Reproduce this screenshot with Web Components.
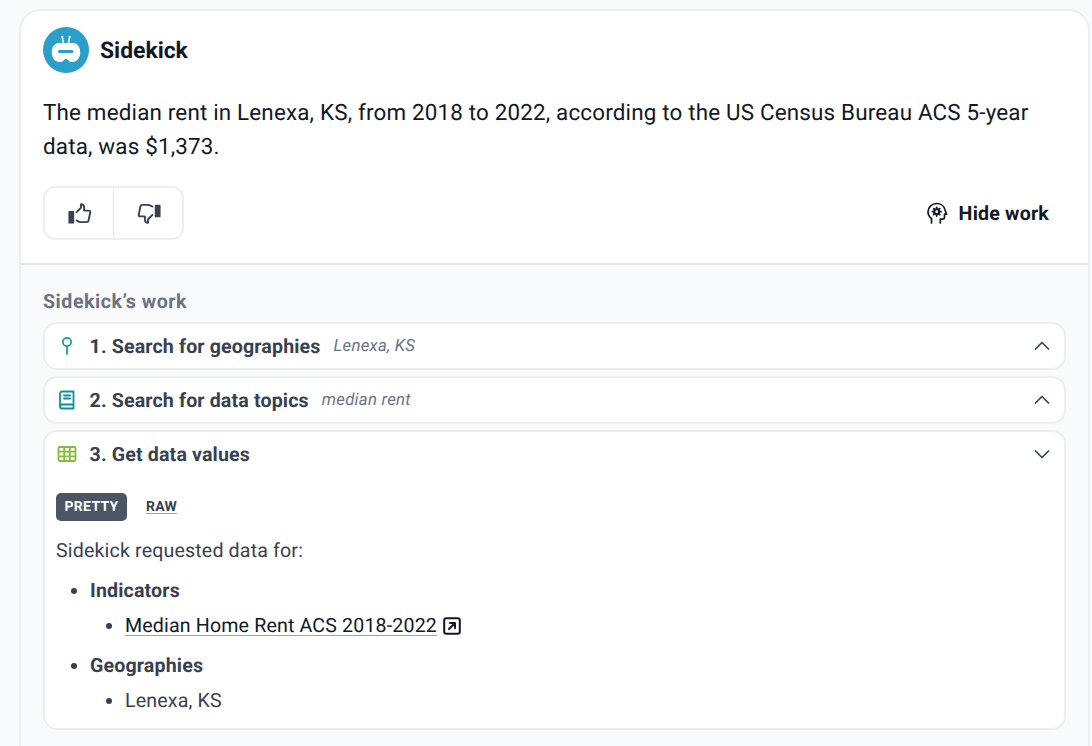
<!DOCTYPE html>
<html lang="en">
<head>
<meta charset="utf-8">
<title>Sidekick</title>
<style>
html,body{margin:0;height:746px;overflow:hidden;background:#fff}
body{font-family:Roboto,"Liberation Sans",sans-serif;color:#374151;text-rendering:geometricPrecision}
</style>
</head>
<body>
<sk-panel>
  <sk-answer>The median rent in Lenexa, KS, from 2018 to 2022, according to the US Census Bureau ACS 5-year data, was $1,373.</sk-answer>
  <sk-work>
    <sk-step num="1" title="Search for geographies" note="Lenexa, KS" icon="pin"></sk-step>
    <sk-step num="2" title="Search for data topics" note="median rent" icon="book"></sk-step>
    <sk-step num="3" title="Get data values" icon="grid" open>
      <sk-tabs></sk-tabs>
      <sk-request></sk-request>
    </sk-step>
  </sk-work>
</sk-panel>

<script>
(function(){
  const ICONS={
    pin:'<svg width="24" height="24" viewBox="0 0 24 24" fill="none" stroke="#10a37f" stroke-width="1.7" stroke-linecap="round"><circle cx="12" cy="8" r="4.1"/><path d="M12 12.2V20"/></svg>',
    book:'<svg width="24" height="24" viewBox="0 0 24 24" fill="none" stroke="#0f8f96" stroke-width="1.8" stroke-linecap="round" stroke-linejoin="round"><path d="M5 18.5V5.5A2 2 0 0 1 7 3.5h11.5v13H7A2 2 0 0 0 5 18.5a2 2 0 0 0 2 2h11.5v-4"/><path d="M9 7.5h6M9 10.5h6"/></svg>',
    grid:'<svg width="24" height="24" viewBox="0 0 24 24" fill="none" stroke="#84bd3c" stroke-width="1.8"><rect x="3.5" y="5" width="17" height="14" rx="1.2"/><path d="M3.5 9.7h17M3.5 14.3h17M9.2 5v14M14.8 5v14"/></svg>'
  };
  const CHEV={
    up:'<svg width="24" height="24" viewBox="0 0 24 24" fill="none" stroke="#374151" stroke-width="1.7" stroke-linecap="round" stroke-linejoin="round"><path d="M5.5 15 12 8.500l6.500 6.500"/></svg>',
    down:'<svg width="24" height="24" viewBox="0 0 24 24" fill="none" stroke="#374151" stroke-width="1.7" stroke-linecap="round" stroke-linejoin="round"><path d="M5.500 9 12 15.500 18.500 9"/></svg>'
  };

  class SkPanel extends HTMLElement {
    constructor(){
      super();
      this.attachShadow({mode:'open'}).innerHTML=`
<style>
:host{display:block;background:#f9fafb;height:746px;padding:9px 2px 0 19px;box-sizing:border-box}
.card{border:2px solid #eceef0;border-radius:22px;background:#f9fafb;overflow:hidden;height:760px;box-sizing:border-box}
</style>
<div class="card"><slot></slot></div>`;
    }
  }

  class SkAnswer extends HTMLElement {
    constructor(){
      super();
      this.attachShadow({mode:'open'}).innerHTML=`
<style>
:host{display:block;background:#fff;border-bottom:2px solid #e5e7eb;padding:16px 23px 0 22px;height:254px;box-sizing:border-box}
.head{display:flex;align-items:center;gap:11px;height:46px}
.name{font-size:22.900px;font-weight:700;color:#111827}
.text{margin-top:23px;font-size:22.400px;line-height:34px;color:#111827;letter-spacing:.18px}
.row{display:flex;justify-content:space-between;align-items:center;margin-top:22px}
.votes{display:flex;border:2px solid #eceef0;border-radius:12px;height:54px;box-sizing:border-box}
.votes span{width:68px;display:flex;align-items:center;justify-content:center}
.votes span+span{border-left:1px solid #e5e7eb}
.votes span+span svg{margin-left:2px}
.hide{display:flex;align-items:center;gap:10px;font-size:19.600px;font-weight:700;color:#111827;padding-right:16px;letter-spacing:.2px}
svg{display:block}
</style>
<div class="head">
  <svg width="46" height="46" viewBox="0 0 46 46">
    <circle cx="23" cy="23" r="23" fill="#2a9fc9"/>
    <path d="M20.500 16 19.300 10M25.500 16 26.700 10" stroke="#fff" stroke-width="1.500" stroke-linecap="round"/>
    <circle cx="19.300" cy="9.800" r="1.100" fill="#fff"/><circle cx="26.700" cy="9.800" r="1.100" fill="#fff"/>
    <path d="M16 16h14c4.500 0 7.200 4 7.200 9.500S34 35 29.500 35c-2.500 0-4-.8-4.500-2.300h-4C20.500 34.200 19 35 16.500 35 12 35 8.800 31 8.800 25.500S11.500 16 16 16z" fill="#fff"/>
    <rect x="15" y="23" width="15.500" height="3" rx="1.500" fill="#2a9fc9"/>
    <path d="M21.800 35v-3h2.400v3z" fill="#2a9fc9"/>
  </svg>
  <span class="name">Sidekick</span>
</div>
<div class="text"><slot></slot></div>
<div class="row">
  <div class="votes">
    <span><svg width="25" height="25" viewBox="0 0 26 26" fill="none" stroke="#374151" stroke-width="2" stroke-linejoin="round" stroke-linecap="round"><rect x="1.500" y="10.500" width="6" height="13" rx="1" fill="#374151" stroke="none"/><path d="M10 11.500 14.500 7V3.500c1.800-.3 3.300 1 3.300 3V10h5c1 0 1.600.9 1.400 1.800l-1.800 8.500c-.2.900-.9 1.700-1.900 1.700h-6c-1.800 0-2.800-.6-4.400-1.800"/></svg></span>
    <span><svg width="25" height="25" viewBox="0 0 26 26" fill="none" stroke="#374151" stroke-width="2" stroke-linejoin="round" stroke-linecap="round"><rect x="18.500" y="4" width="6" height="13" rx="1" fill="#374151" stroke="none"/><path d="M16 14.500 11.500 19v3.500c-1.800.3-3.300-1-3.300-3V16h-5c-1 0-1.600-.9-1.400-1.800l1.800-8.500c.2-.9.900-1.700 1.900-1.700h6c1.800 0 2.800.6 4.400 1.800"/></svg></span>
  </div>
  <div class="hide">
    <svg width="24" height="24" viewBox="0 0 24 24" fill="none" stroke="#111827" stroke-width="1.700" stroke-linecap="round" stroke-linejoin="round"><path d="M6.500 22v-4.500C4.300 16 3 13.600 3 11c0-5 4-8.500 8.700-8.500 4.200 0 7.600 2.700 8.300 6.500l1.700 4.200h-2.200V16c0 1.300-1 2.200-2.200 2.200h-2V22"/><circle cx="11.700" cy="10.700" r="2.400" stroke-width="2"/><path d="M11.700 6.400v1.200M11.700 13.800V15M7.400 10.700h1.200M14.800 10.700H16M8.700 7.700l.8.8M13.900 12.900l.8.8M8.700 13.700l.8-.8M13.900 8.500l.8-.8" stroke-width="1.800"/></svg>
    <span>Hide work</span>
  </div>
</div>`;
    }
  }

  class SkWork extends HTMLElement {
    constructor(){
      super();
      this.attachShadow({mode:'open'}).innerHTML=`
<style>
:host{display:block;padding:25px 22px 0 22px}
h2{margin:0 0 8px;font-size:19.600px;line-height:24px;font-weight:700;color:#6b7280;letter-spacing:.55px}
.steps{display:flex;flex-direction:column;gap:6px}
</style>
<h2>Sidekick’s work</h2>
<div class="steps"><slot></slot></div>`;
    }
  }

  class SkStep extends HTMLElement {
    constructor(){
      super();
      const open=this.hasAttribute('open');
      const note=this.getAttribute('note');
      const root=this.attachShadow({mode:'open'});
      root.innerHTML=`
<style>
:host{display:block;background:#fff;border:2px solid #eceef0;border-radius:14px}
.top{display:flex;align-items:center;height:44px;padding:0 10px 0 10px}
.ic{width:24px;height:24px;margin-right:10.500px}
.title{font-size:19.600px;font-weight:700;color:#374151;letter-spacing:.15px}
.note{font-size:16.800px;font-style:italic;color:#6b7280;margin-left:13px;letter-spacing:.25px}
.chev{margin-left:auto}
.body{padding:17px 11px 10px}
svg{display:block}
</style>
<div class="top">
  <span class="ic">${ICONS[this.getAttribute('icon')]}</span>
  <span class="title">${this.getAttribute('num')}. ${this.getAttribute('title')}</span>
  ${note?`<span class="note">${note}</span>`:''}
  <span class="chev">${open?CHEV.down:CHEV.up}</span>
</div>
${open?'<div class="body"><slot></slot></div>':''}`;
    }
  }

  class SkTabs extends HTMLElement {
    constructor(){
      super();
      this.attachShadow({mode:'open'}).innerHTML=`
<style>
:host{display:flex;align-items:center;gap:19px}
.on{background:#4b5563;color:#fff;border-radius:5px;height:28px;padding:0 8.500px;display:flex;align-items:center;font-size:14px;font-weight:700;letter-spacing:.3px}
.off{font-size:14px;font-weight:700;color:#374151;text-decoration:underline;text-decoration-color:#9ca3af;text-underline-offset:2px;letter-spacing:.2px}
</style>
<span class="on">PRETTY</span><span class="off">RAW</span>`;
    }
  }

  class SkRequest extends HTMLElement {
    constructor(){
      super();
      this.attachShadow({mode:'open'}).innerHTML=`
<style>
:host{display:block;font-size:19.600px;color:#374151;letter-spacing:.16px}
p{margin:14px 0 0;line-height:32px}
ul{margin:0;padding:0 0 0 34px;list-style:disc}
ul ul{padding-left:35px}
li{line-height:35px}
ul>li+li{margin-top:5px}
b{font-weight:700}
a{color:#111827;text-decoration:underline;text-decoration-color:#9ca3af;text-underline-offset:3px}
.ext{display:inline-block;vertical-align:-3px;margin-left:6px}
.list{margin-top:6px}
</style>
<p>Sidekick requested data for:</p>
<ul class="list">
  <li><b>Indicators</b>
    <ul><li><a>Median Home Rent ACS 2018-2022</a><svg class="ext" width="18" height="18" viewBox="0 0 18 18" fill="none" stroke="#111827" stroke-width="2" stroke-linecap="round" stroke-linejoin="round"><rect x="1.200" y="1.200" width="15.600" height="15.600" rx="2"/><path d="M6 12l6-6M7 6h5v5"/></svg></li></ul>
  </li>
  <li><b>Geographies</b>
    <ul><li>Lenexa, KS</li></ul>
  </li>
</ul>`;
    }
  }

  customElements.define('sk-panel',SkPanel);
  customElements.define('sk-answer',SkAnswer);
  customElements.define('sk-work',SkWork);
  customElements.define('sk-step',SkStep);
  customElements.define('sk-tabs',SkTabs);
  customElements.define('sk-request',SkRequest);
})();
</script>
</body>
</html>
